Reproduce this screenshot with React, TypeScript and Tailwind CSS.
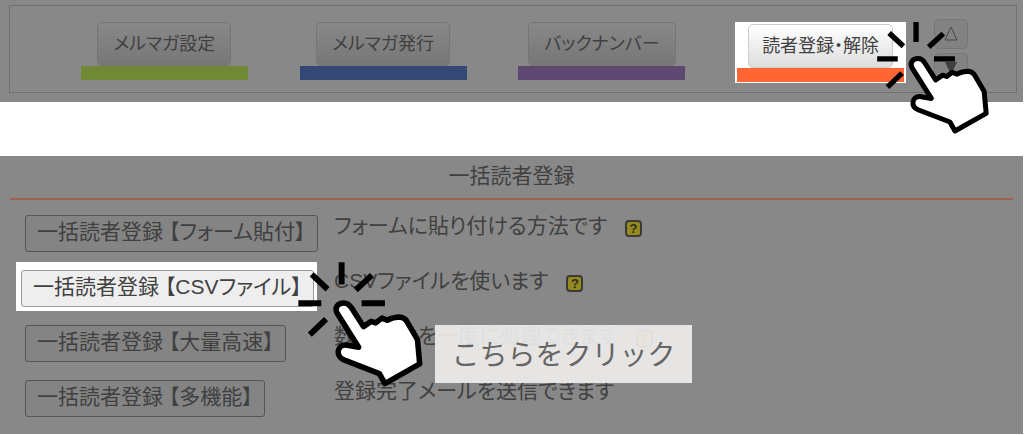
import React from "react";

const navItems = [
  { label: "メルマガ設定", bar: "bg-[#718935]" },
  { label: "メルマガ発行", bar: "bg-[#334874]" },
  { label: "バックナンバー", bar: "bg-[#5d4872]" },
];

function ClickHand({ className }: { className: string }) {
  return (
    <svg viewBox="468 60 342 346" className={className} aria-hidden="true">
      <g stroke="#000" strokeWidth="16" fill="none">
        <path d="M588 66V126M507 99L550 139M626 141L670 101M471 177H533M642 177H705M502 262L546 220" />
      </g>
      <path
        d="M576 204C568 188 578 176 594 176C604 176 610 182 615 190L647 240L668 226L680 230L697 217L711 223C725 215 735 214 745 214C755 215 761 219 765 227L793 275L799 341L705 394L690 367L594 330C570 319 576 289 600 290L634 296Z"
        fill="#fff"
        stroke="#000"
        strokeWidth="15"
        strokeLinejoin="round"
      />
    </svg>
  );
}

function HelpButton() {
  return (
    <button
      type="button"
      aria-label="ヘルプ"
      className="mt-1 ml-[18px] flex h-[17px] w-[17px] shrink-0 items-center justify-center rounded-sm border-2 border-[#3c3a34] bg-[#958a20] font-['Liberation_Sans'] text-[13px] leading-none font-bold text-[#302c20]"
    >
      ?
    </button>
  );
}

function Note({ text, help }: { text: string; help: boolean }) {
  return (
    <p className="flex h-[30px] items-center text-[21px] whitespace-nowrap">
      {text}
      {help && <HelpButton />}
    </p>
  );
}

function MethodRow({ button, note, help }: { button: string; note: string; help: boolean }) {
  return (
    <>
      <button
        type="button"
        className="mt-1 flex h-[37px] items-center justify-self-start rounded-[3px] border border-[#555] bg-[#848484] px-[11px] pb-1 text-[21px] whitespace-nowrap"
      >
        {button}
      </button>
      <Note text={note} help={help} />
    </>
  );
}

export default function App() {
  return (
    <main className="bg-white font-['Liberation_Sans','Noto_Sans_CJK_JP',sans-serif] text-[#404040] [font-feature-settings:'palt']">
      <nav className="mr-px bg-[#888] pt-[5px] pr-[6px] pb-[9px] pl-[9px]">
        <div className="flex h-[88px] border border-[#707070] pr-12 pl-[45px]">
          {navItems.map((item) => (
            <div key={item.label} className="flex flex-1 flex-col items-center pt-4">
              <button
                type="button"
                className="h-11 rounded-[5px] border border-[#757575] bg-linear-to-b from-[#888] to-[#777] px-[15px] text-[18px] whitespace-nowrap"
              >
                {item.label}
              </button>
              <div className={`h-[14px] w-[167px] ${item.bar}`} />
            </div>
          ))}
          <div className="flex flex-1 justify-center pt-4">
            <div className="flex h-[61px] flex-col items-center bg-white px-[2px] pt-[2px]">
              <button
                type="button"
                className="h-11 rounded-[5px] border border-[#ccc] bg-linear-to-b from-white to-[#ddd] px-[13px] text-[18px] whitespace-nowrap"
              >
                読者登録・解除
              </button>
              <div className="h-[14px] w-[167px] bg-[#ff6633]" />
            </div>
          </div>
          <div className="flex flex-col gap-1 pt-[13px] pl-1">
            <button type="button" aria-label="上へ" className="flex h-[30px] w-[34px] items-center justify-center rounded-[5px] border border-[#777] bg-[#828282]">
              <svg viewBox="0 0 16 16" className="size-4" aria-hidden="true">
                <path d="M8 1L14 14H2Z" fill="none" stroke="#484848" />
              </svg>
            </button>
            <button type="button" aria-label="下へ" className="flex h-[30px] w-[34px] items-center justify-center rounded-[5px] border border-[#777] bg-[#828282]">
              <svg viewBox="0 0 16 16" className="size-4" aria-hidden="true">
                <path d="M8 15L14 2H2Z" fill="#404040" />
              </svg>
            </button>
          </div>
        </div>
      </nav>

      <section className="relative mt-[54px] mr-px bg-[#888] px-[10px] pb-[17px]">
        <h1 className="border-b-2 border-[#a0614a] pt-1 pb-[6px] text-center text-[21px] leading-8">一括読者登録</h1>
        <div className="grid grid-cols-[293px_1fr] gap-x-4 gap-y-[14px] pt-[11px] pl-[15px]">
          <MethodRow button="一括読者登録 【フォーム貼付】" note="フォームに貼り付ける方法です" help />
          <div className="-mt-1 -mb-1 -ml-[9px] h-[49px] justify-self-start bg-white pt-2 pr-[3px] pl-[5px]">
            <button
              type="button"
              className="flex h-[37px] items-center rounded-[3px] border border-[#999] bg-[#eee] px-[11px] pb-1 text-[21px] whitespace-nowrap"
            >
              一括読者登録 【CSVファイル】
            </button>
          </div>
          <Note text="CSVファイルを使います" help />
          <MethodRow button="一括読者登録 【大量高速】" note="数十万件を一度に処理できます" help />
          <MethodRow button="一括読者登録 【多機能】" note="登録完了メールを送信できます" help={false} />
        </div>
        <div className="absolute top-[169px] left-[435px] flex h-[58px] w-[257px] items-center justify-center bg-[#edeceb]/93 pt-1 text-[28px] text-[#666] [font-feature-settings:normal]">
          こちらをクリック
        </div>
        <ClickHand className="absolute top-[104px] left-[297px] h-[128px] w-[127px]" />
      </section>
      <ClickHand className="absolute top-5 left-[876px] h-[115px] w-[114px]" />
    </main>
  );
}
